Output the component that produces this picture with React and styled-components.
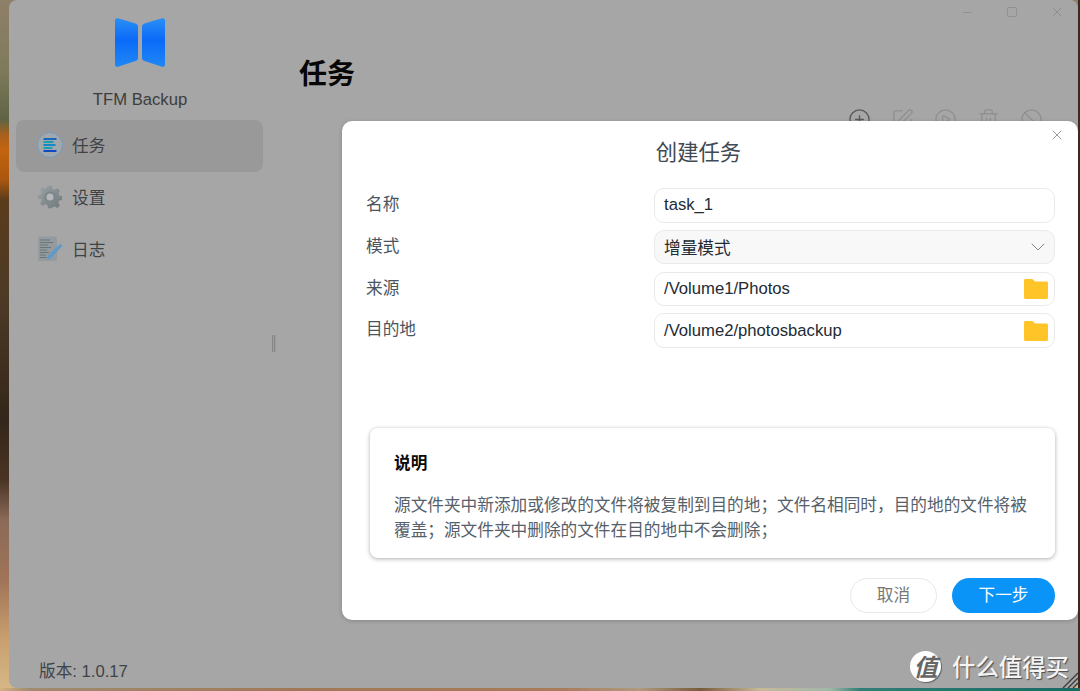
import styled, { createGlobalStyle } from "styled-components";
import { ChevronDown, CirclePlus, SquarePen, CirclePlay, Trash2, Ban, Minus, Square, X } from "lucide-react";

const FONT = `"Liberation Sans", "Noto Sans CJK SC", sans-serif`;

const GlobalStyle = createGlobalStyle`
  html, body {
    margin: 0;
    padding: 0;
    overflow: hidden;
  }
  * {
    box-sizing: border-box;
  }
`;

const App = () => {
  return (
    <>
      <GlobalStyle />
      <Desktop>
        <Window>
          <Sidebar>
            <Logo />
            <AppName>TFM Backup</AppName>
            <Nav>
              <NavItem $active>
                <TaskIcon />
                <span>任务</span>
              </NavItem>
              <NavItem>
                <GearIcon />
                <span>设置</span>
              </NavItem>
              <NavItem>
                <LogIcon />
                <span>日志</span>
              </NavItem>
            </Nav>
            <Version>版本: 1.0.17</Version>
            <Handle />
          </Sidebar>
          <Main>
            <WindowBar>
              <WinBtn><Minus size={13} strokeWidth={1.2} /></WinBtn>
              <WinBtn><Square size={12} strokeWidth={1.3} /></WinBtn>
              <WinBtn><X size={16} strokeWidth={1.1} /></WinBtn>
            </WindowBar>
            <Title>任务</Title>
            <Toolbar>
              <CirclePlus size={23} strokeWidth={1.4} color="#5a5a5a" />
              <SquarePen size={23} strokeWidth={1.4} color="#909090" />
              <CirclePlay size={23} strokeWidth={1.4} color="#909090" />
              <Trash2 size={23} strokeWidth={1.4} color="#909090" />
              <Ban size={23} strokeWidth={1.4} color="#909090" />
            </Toolbar>
          </Main>

          <Dialog>
            <CloseBtn><X size={16} strokeWidth={1.1} /></CloseBtn>
            <DialogTitle>创建任务</DialogTitle>
            <Form>
              <Label>名称</Label>
              <Field>task_1</Field>
              <Label>模式</Label>
              <Field $select>
                增量模式
                <SelectArrow size={24} strokeWidth={0.9} />
              </Field>
              <Label>来源</Label>
              <Field>
                /Volume1/Photos
                <FolderIcon />
              </Field>
              <Label>目的地</Label>
              <Field>
                /Volume2/photosbackup
                <FolderIcon />
              </Field>
            </Form>
            <NoteCard>
              <NoteTitle>说明</NoteTitle>
              <NoteText>
                源文件夹中新添加或修改的文件将被复制到目的地；文件名相同时，目的地的文件将被覆盖；源文件夹中删除的文件在目的地中不会删除；
              </NoteText>
            </NoteCard>
            <Footer>
              <CancelButton>取消</CancelButton>
              <NextButton>下一步</NextButton>
            </Footer>
          </Dialog>
        </Window>
        <Grip />
        <Watermark>
          <WatermarkBadge>值</WatermarkBadge>
          <span>什么值得买</span>
        </Watermark>
      </Desktop>
    </>
  );
};

const Logo = () => (
  <LogoSvg viewBox="0 0 52 49" width="52" height="49">
    <defs>
      <linearGradient id="logoBlue" x1="0" y1="0" x2="0" y2="1">
        <stop offset="0" stopColor="#2a8ff5" />
        <stop offset="0.45" stopColor="#0a6af8" />
        <stop offset="1" stopColor="#2088f5" />
      </linearGradient>
    </defs>
    <path
      d="M1 2.500C1 .8 2.400-.2 4 .3L21.500 5.600c1.500.5 2.500 1.500 2.500 3v31.500c0 1.500-1 2.500-2.500 3L4 48.700C2.400 49.200 1 48.200 1 46.500z"
      fill="url(#logoBlue)"
    />
    <path
      d="M51 2.500C51 .8 49.600-.2 48 .3L30.500 5.600c-1.500.5-2.500 1.500-2.500 3v31.500c0 1.500 1 2.500 2.500 3L48 48.700c1.600.5 3-.5 3-2.200z"
      fill="url(#logoBlue)"
    />
  </LogoSvg>
);

const TaskIcon = () => (
  <svg viewBox="0 0 26 26" width="26" height="26">
    <circle cx="13" cy="13" r="12.400" fill="#a3a8ad" stroke="#6a9cc6" strokeWidth="0.8" />
    <rect x="6.500" y="6" width="13" height="2" fill="#1866c0" />
    <rect x="6.500" y="9" width="10" height="2" fill="#16a0b4" />
    <rect x="6.500" y="12" width="12" height="2" fill="#1488c4" />
    <rect x="6.500" y="15" width="9" height="2" fill="#16a0b4" />
    <rect x="6.500" y="18" width="13" height="2" fill="#1248c0" />
  </svg>
);

const GearIcon = () => (
  <svg viewBox="-1 -1 28 28" width="26" height="26">
    <defs>
      <linearGradient id="gearGrey" x1="0" y1="0" x2="1" y2="1">
        <stop offset="0" stopColor="#9aa3a6" />
        <stop offset="1" stopColor="#6f787b" />
      </linearGradient>
    </defs>
    <path
      d="M11 1h4l.7 3.300 2.300 1 2.900-1.800 2.800 2.800-1.800 2.900 1 2.300 3.100.7v4l-3.100.7-1 2.300 1.800 2.900-2.800 2.800-2.900-1.800-2.300 1L15 25h-4l-.7-3.100-2.300-1-2.900 1.800-2.800-2.800 1.800-2.900-1-2.300L0 15v-4l3.100-.7 1-2.300-1.800-2.900 2.800-2.800L7 4.100l2.300-1z"
      fill="url(#gearGrey)"
    />
    <circle cx="13" cy="13" r="6" fill="#7d8689" />
    <circle cx="13" cy="13" r="3.800" fill="#b4b8ba" />
  </svg>
);

const LogIcon = () => (
  <svg viewBox="0 0 26 26" width="26" height="26">
    <rect x="1" y="0.500" width="19" height="24.500" rx="1" fill="#939ba0" />
    <path
      d="M3 4h10M3 6.500h13M3 9h8M3 11.500h11M3 14h7M3 16.500h9M3 19h6M3 21.500h7"
      stroke="#62696d"
      strokeWidth="0.8"
    />
    <path d="M10 24l1.400-4.500L23.500 7.500l2 2.300L14 22z" fill="#5e9ac9" />
  </svg>
);

const FolderIcon = () => (
  <FolderSvg viewBox="0 0 24 20" width="24" height="20">
    <path
      d="M0 1.500C0 .6.600 0 1.500 0h6.300c.6 0 1 .2 1.400.6L11 2.500h11.500c.9 0 1.500.6 1.500 1.500v14.500c0 .9-.6 1.500-1.500 1.500h-21C.6 20 0 19.400 0 18.500z"
      fill="#ffc428"
    />
  </FolderSvg>
);

const Grip = () => (
  <GripSvg viewBox="0 0 16 18" width="16" height="18">
    <path d="M1 18L16 3M6 18L16 8M11 18l5-5" stroke="#3c3c3c" strokeWidth="1.400" fill="none" />
  </GripSvg>
);

const Desktop = styled.div`
  position: relative;
  width: 1080px;
  height: 691px;
  overflow: hidden;
  padding: 0 2px 3px 9px;
  display: flex;
  font-family: ${FONT};
  background:
    linear-gradient(
      90deg,
      #d4b080 0,
      #a08a70 30px,
      #a07858 300px,
      #a97a5c 560px,
      #b09a80 640px,
      #7a5a3c 700px,
      #c8b898 760px,
      #9fb8a8 830px,
      #2f7f76 860px,
      #186a62 1080px
    ) bottom / 100% 3px no-repeat,
    linear-gradient(#3a2a20, #3a2a20) right / 2px 100% no-repeat,
    linear-gradient(
      180deg,
      #8f8068 0,
      #7f7a5c 70px,
      #5f6444 120px,
      #a8601c 135px,
      #c4640f 150px,
      #a9560f 180px,
      #5a3c1c 200px,
      #4d3a26 300px,
      #33261a 420px,
      #4a3424 480px,
      #8a6a58 520px,
      #a07458 580px,
      #c8a070 640px,
      #d8b888 691px
    );
`;

const Window = styled.div`
  position: relative;
  flex: 1;
  display: flex;
  background: #a6a6a6;
  border-radius: 8px;
  overflow: hidden;
`;

const Sidebar = styled.aside`
  position: relative;
  width: 265px;
  flex-shrink: 0;
  display: flex;
  flex-direction: column;
  align-items: center;
  padding: 18px 3px 6px 0;
`;

const LogoSvg = styled.svg`
  display: block;
  flex-shrink: 0;
`;

const AppName = styled.div`
  margin-top: 22px;
  font-size: 16.67px;
  line-height: 22px;
  color: #3d3d3d;
`;

const Nav = styled.nav`
  margin-top: 9px;
  align-self: stretch;
  display: flex;
  flex-direction: column;
  padding-left: 7px;
`;

const NavItem = styled.div`
  height: 52px;
  width: 247px;
  display: flex;
  align-items: center;
  gap: 9px;
  padding: 0 0 2px 21px;
  border-radius: 8px;
  font-size: 16.67px;
  color: #404346;
  background: ${(p) => (p.$active ? "#999999" : "transparent")};
`;

const Version = styled.div`
  margin-top: auto;
  align-self: flex-start;
  margin-left: 30px;
  font-size: 16.67px;
  line-height: 20px;
  color: #3e444a;
`;

const Handle = styled.div`
  position: absolute;
  left: 263px;
  top: 335px;
  width: 4px;
  height: 17px;
  background: linear-gradient(90deg, #858585 0 1px, #a0a0a0 1px 2px, #858585 2px 3px, #9c9c9c 3px);
`;

const Main = styled.main`
  flex: 1;
  display: flex;
  flex-direction: column;
`;

const WindowBar = styled.div`
  height: 24px;
  display: flex;
  justify-content: flex-end;
  align-items: center;
  gap: 21px;
  padding-right: 9px;
  color: #858585;
`;

const WinBtn = styled.div`
  width: 24px;
  height: 24px;
  display: flex;
  align-items: center;
  justify-content: center;
`;

const Title = styled.h1`
  margin: 31px 0 0 25px;
  font-size: 28px;
  line-height: 40px;
  font-weight: 700;
  color: #060606;
`;

const Toolbar = styled.div`
  margin-top: 13px;
  display: flex;
  justify-content: flex-end;
  gap: 20px;
  padding-right: 35px;
`;

const Dialog = styled.section`
  position: absolute;
  top: 121px;
  left: 333px;
  right: 0;
  height: 499px;
  display: flex;
  flex-direction: column;
  background: #fff;
  border-radius: 10px;
  box-shadow: 0 1px 4px rgba(0, 0, 0, 0.2);
`;

const CloseBtn = styled.div`
  position: absolute;
  top: 6px;
  right: 13px;
  display: flex;
  color: #777;
`;

const DialogTitle = styled.h2`
  margin: 16px 0 0;
  padding-right: 23px;
  font-size: 21.33px;
  line-height: 33px;
  font-weight: 400;
  text-align: center;
  color: #3f4a54;
`;

const Form = styled.div`
  margin-top: 18px;
  display: grid;
  grid-template-columns: 288px 401px;
  row-gap: 7.3px;
  padding-left: 24px;
`;

const Label = styled.div`
  font-size: 16.67px;
  line-height: 33px;
  color: #4a5560;
`;

const Field = styled.div`
  height: 34.5px;
  padding: 0 6px 0 9px;
  display: flex;
  align-items: center;
  justify-content: space-between;
  font-size: 16.67px;
  color: #222b33;
  border: 1px solid #eaeaea;
  border-radius: 10px;
  background: ${(p) => (p.$select ? "#f8f8f8" : "#fff")};
`;

const SelectArrow = styled(ChevronDown)`
  margin-right: -2px;
  color: #777;
`;

const FolderSvg = styled.svg`
  display: block;
  flex-shrink: 0;
`;

const NoteCard = styled.div`
  margin: 80px 23px 0 28px;
  height: 130px;
  padding: 24px 24px 0;
  border-radius: 8px;
  background: #fff;
  box-shadow: 0 1px 4px rgba(0, 0, 0, 0.32);
`;

const NoteTitle = styled.div`
  font-size: 16.67px;
  line-height: 24px;
  font-weight: 700;
  color: #0a0a0a;
`;

const NoteText = styled.p`
  margin: 17px 0 0;
  font-size: 16.67px;
  line-height: 25.5px;
  color: #56606a;
`;

const Footer = styled.div`
  margin-top: 20px;
  display: flex;
  justify-content: flex-end;
  gap: 15px;
  padding-right: 23px;
`;

const CancelButton = styled.div`
  width: 87px;
  height: 35px;
  padding-bottom: 3px;
  display: flex;
  align-items: center;
  justify-content: center;
  font-size: 16.67px;
  color: #777;
  border: 1px solid #e8e8e8;
  border-radius: 18px;
`;

const NextButton = styled(CancelButton)`
  width: 103px;
  color: #fff;
  border: none;
  background: #0a94f8;
`;

const GripSvg = styled.svg`
  position: absolute;
  right: 2px;
  bottom: 3px;
`;

const Watermark = styled.div`
  position: absolute;
  left: 910px;
  top: 649px;
  display: flex;
  align-items: center;
  gap: 11px;
  font-size: 23.4px;
  font-weight: 500;
  color: #f4f4f4;
  text-shadow: 1px 1px 1px rgba(0, 0, 0, 0.55);
`;

const WatermarkBadge = styled.div`
  width: 31px;
  height: 31px;
  padding-bottom: 2px;
  display: flex;
  align-items: center;
  justify-content: center;
  border-radius: 50%;
  background: #fff;
  color: #666;
  font-size: 24px;
  font-weight: 700;
  font-style: italic;
  text-shadow: none;
  box-shadow: 1px 1px 1px rgba(0, 0, 0, 0.4);
`;

export default App;
